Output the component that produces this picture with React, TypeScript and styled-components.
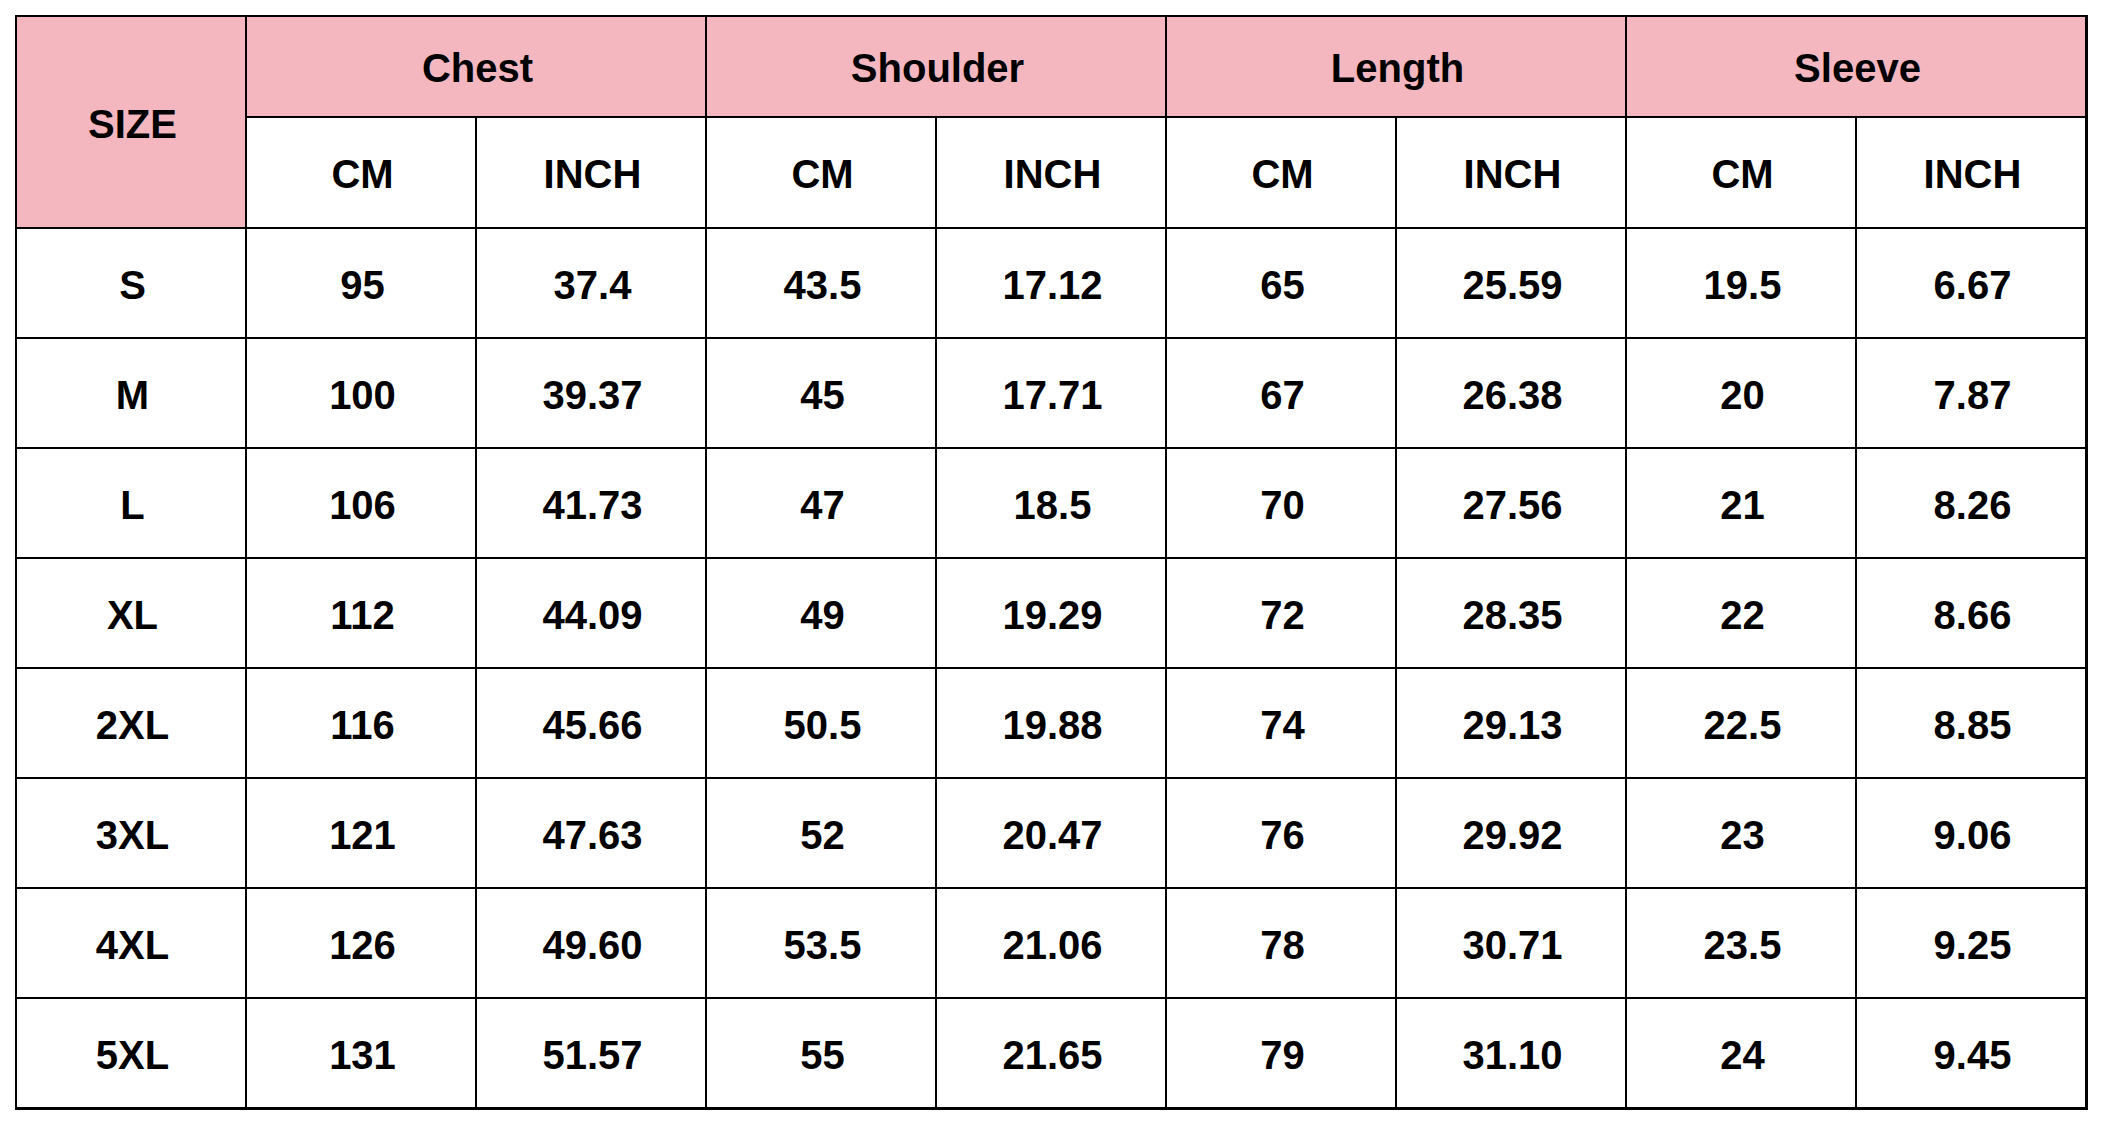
import React from "react";
import styled, { createGlobalStyle } from "styled-components";

const GlobalStyle = createGlobalStyle`
  html, body {
    margin: 0;
    padding: 0;
    background: #ffffff;
  }
  body {
    font-family: "Liberation Sans", Arial, sans-serif;
  }
`;

const Page = styled.div`
  padding: 15px 0 0 15px;
  background: #ffffff;
`;

const Table = styled.div`
  display: grid;
  width: 2073px;
  box-sizing: border-box;
  grid-template-columns: repeat(9, 1fr);
  grid-template-rows: 99px 109px repeat(8, 108px);
  gap: 2px;
  background: #000000;
  border-style: solid;
  border-color: #000000;
  border-width: 2px 3px 3px 2px;
`;

const Cell = styled.div<{ $pink?: boolean; $colSpan?: number; $rowSpan?: number }>`
  display: flex;
  align-items: center;
  justify-content: center;
  box-sizing: border-box;
  padding: 3px 0 0 3px;
  background: ${(p) => (p.$pink ? "#f4b7bf" : "#ffffff")};
  color: #000000;
  font-family: "Liberation Sans", Arial, sans-serif;
  font-weight: 700;
  font-size: 40px;
  line-height: 1;
  grid-column: ${(p) => (p.$colSpan ? `span ${p.$colSpan}` : "auto")};
  grid-row: ${(p) => (p.$rowSpan ? `span ${p.$rowSpan}` : "auto")};
`;

const groups = ["Chest", "Shoulder", "Length", "Sleeve"];

const rows: string[][] = [
  ["S", "95", "37.4", "43.5", "17.12", "65", "25.59", "19.5", "6.67"],
  ["M", "100", "39.37", "45", "17.71", "67", "26.38", "20", "7.87"],
  ["L", "106", "41.73", "47", "18.5", "70", "27.56", "21", "8.26"],
  ["XL", "112", "44.09", "49", "19.29", "72", "28.35", "22", "8.66"],
  ["2XL", "116", "45.66", "50.5", "19.88", "74", "29.13", "22.5", "8.85"],
  ["3XL", "121", "47.63", "52", "20.47", "76", "29.92", "23", "9.06"],
  ["4XL", "126", "49.60", "53.5", "21.06", "78", "30.71", "23.5", "9.25"],
  ["5XL", "131", "51.57", "55", "21.65", "79", "31.10", "24", "9.45"],
];

export default function App() {
  return (
    <>
      <GlobalStyle />
      <Page>
        <Table>
          <Cell $pink $rowSpan={2}>SIZE</Cell>
          {groups.map((g) => (
            <Cell key={g} $pink $colSpan={2}>
              {g}
            </Cell>
          ))}
          {groups.map((g) => (
            <React.Fragment key={g + "-units"}>
              <Cell>CM</Cell>
              <Cell>INCH</Cell>
            </React.Fragment>
          ))}
          {rows.map((r) =>
            r.map((v, i) => <Cell key={r[0] + "-" + i}>{v}</Cell>)
          )}
        </Table>
      </Page>
    </>
  );
}
